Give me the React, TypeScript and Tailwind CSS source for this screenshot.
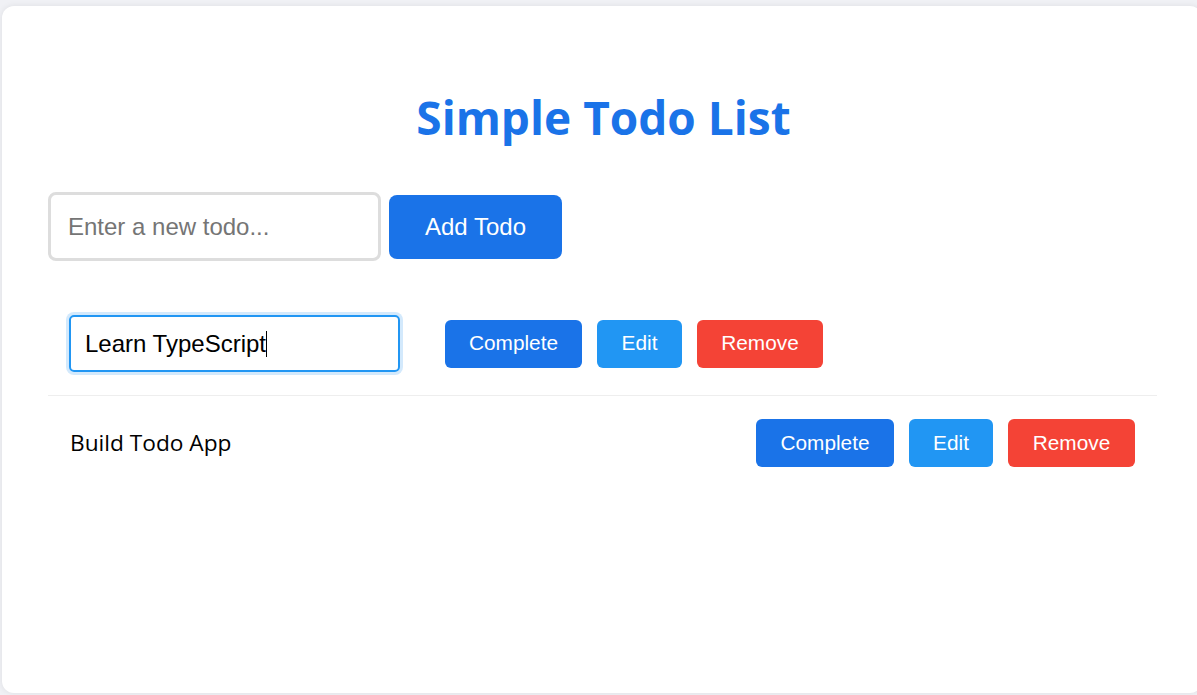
import { useState } from "react";

type Todo = { id: number; text: string; done: boolean };

const btn = "h-12 rounded-md px-6 text-[20.8px] text-white leading-none";

const App = () => {
   const [ todos ] = useState<Todo[]>([
      { id: 1, text: "Learn TypeScript", done: false },
      { id: 2, text: "Build Todo App", done: false },
   ]);
   const editingId = 1;

   return (
      <div className="min-h-screen bg-[#f0f1f5] pt-[6px] pl-[2px] overflow-hidden" style={{ fontFamily: '"Liberation Sans", Arial, sans-serif' }}>
         <div className="w-[1200px] h-[687px] bg-white rounded-xl shadow-[0_0_6px_rgba(0,0,0,0.08)] pl-[46px] pr-[43px] pt-[87px]">
            <h1 className="text-center text-[46px] leading-[48px] font-bold text-[#1a73e8]" style={{ fontFamily: '"Open Sans", sans-serif' }}>Simple Todo List</h1>
            <div className="flex items-center gap-2 mt-[51px]">
               <input
                  placeholder="Enter a new todo..."
                  className="w-[333px] h-[69px] border-[3px] border-[#ddd] rounded-lg px-[17px] text-[24px] placeholder:text-[#757575] outline-none"
               />
               <button className="h-16 w-[173px] rounded-lg bg-[#1a73e8] text-white text-[24px]">Add Todo</button>
            </div>
            {/* list of todos */}
            <ul className="mt-[35px] w-[1109px]">
               {todos.map((todo, i) => (
                  <li key={todo.id} className={`flex items-center justify-between px-[22px] ${i === 0 ? 'border-b border-[#eee] pt-[19px] pb-[23px]' : 'py-[23px]'}`}>
                     {todo.id === editingId ? (
                        <div className="flex items-center">
                           <div className="relative">
                              <input
                                 defaultValue={todo.text}
                                 className="w-[331px] h-[57px] border-2 border-[#2196f3] rounded-[5px] pl-[14px] text-[24px] text-black outline-none ring-[3px] ring-[#d3e9fc] -ml-px"
                              />
                              {/* text caret */}
                              <span className="absolute left-[196px] top-[16px] w-px h-[26px] bg-black"></span>
                           </div>
                           <div className="flex gap-[15px] ml-[45px]">
                              <button className={`${btn} w-[137px] bg-[#1a73e8]`}>Complete</button>
                              <button className={`${btn} w-[85px] bg-[#2196f3]`}>Edit</button>
                              <button className={`${btn} w-[126px] bg-[#f44336]`}>Remove</button>
                           </div>
                        </div>
                     ) : (
                        <>
                           <span className="text-[22.7px] text-black" style={{ fontFamily: '"Open Sans", sans-serif' }}>{todo.text}</span>
                           <div className="flex gap-[15px]">
                              <button className={`${btn} w-[138px] bg-[#1a73e8]`}>Complete</button>
                              <button className={`${btn} w-[84px] bg-[#2196f3]`}>Edit</button>
                              <button className={`${btn} w-[127px] bg-[#f44336]`}>Remove</button>
                           </div>
                        </>
                     )}
                  </li>
               ))}
            </ul>
         </div>
      </div>
   )
}
export default App
